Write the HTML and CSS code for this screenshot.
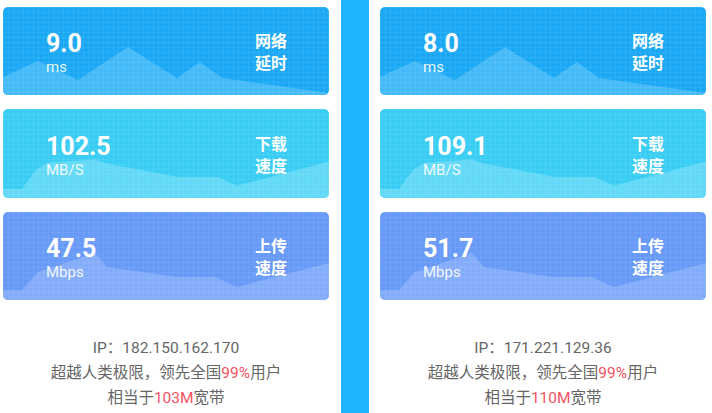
FILE: index.html
```html
<!DOCTYPE html>
<html lang="zh">
<head>
<meta charset="utf-8">
<link rel="stylesheet" href="styles.css">
</head>
<body>
<div class="page">
  <section class="panel panel-left">
    <div class="card card-ping">
      <svg class="wave" viewBox="0 0 326 88" preserveAspectRatio="none"><polygon points="0,70 35,54 75,73 125,40 174,71 197,55 219,71 326,86 326,88 0,88"/></svg>
      <div class="value"><div class="num">9.0</div><div class="unit">ms</div></div>
      <div class="label">网络<br>延时</div>
    </div>
    <div class="card card-down">
      <svg class="wave" viewBox="0 0 326 88" preserveAspectRatio="none"><polygon points="0,79 19,79 33,60 45,53 92,50 104,54 174,67 214,67 234,76 326,52 326,88 0,88"/></svg>
      <div class="value"><div class="num">102.5</div><div class="unit">MB/S</div></div>
      <div class="label">下载<br>速度</div>
    </div>
    <div class="card card-up">
      <svg class="wave" viewBox="0 0 326 88" preserveAspectRatio="none"><polygon points="0,78 19,78 35,60 92,41 104,55 174,65 212,65 234,75 326,51 326,88 0,88"/></svg>
      <div class="value"><div class="num">47.5</div><div class="unit">Mbps</div></div>
      <div class="label">上传<br>速度</div>
    </div>
    <div class="info">
      <p>IP：182.150.162.170</p>
      <p>超越人类极限，领先全国<span class="hl">99%</span>用户</p>
      <p>相当于<span class="hl">103M</span>宽带</p>
    </div>
  </section>
  <div class="divider"></div>
  <section class="panel panel-right">
    <div class="card card-ping">
      <svg class="wave" viewBox="0 0 326 88" preserveAspectRatio="none"><polygon points="0,70 35,54 75,73 125,40 174,71 197,55 219,71 326,86 326,88 0,88"/></svg>
      <div class="value"><div class="num">8.0</div><div class="unit">ms</div></div>
      <div class="label">网络<br>延时</div>
    </div>
    <div class="card card-down">
      <svg class="wave" viewBox="0 0 326 88" preserveAspectRatio="none"><polygon points="0,79 19,79 33,60 45,53 92,50 104,54 174,67 214,67 234,76 326,52 326,88 0,88"/></svg>
      <div class="value"><div class="num">109.1</div><div class="unit">MB/S</div></div>
      <div class="label">下载<br>速度</div>
    </div>
    <div class="card card-up">
      <svg class="wave" viewBox="0 0 326 88" preserveAspectRatio="none"><polygon points="0,78 19,78 35,60 92,41 104,55 174,65 212,65 234,75 326,51 326,88 0,88"/></svg>
      <div class="value"><div class="num">51.7</div><div class="unit">Mbps</div></div>
      <div class="label">上传<br>速度</div>
    </div>
    <div class="info">
      <p>IP：171.221.129.36</p>
      <p>超越人类极限，领先全国<span class="hl">99%</span>用户</p>
      <p>相当于<span class="hl">110M</span>宽带</p>
    </div>
  </section>
</div>
</body>
</html>
```
FILE: styles.css
```css
* { box-sizing: border-box; }
html, body { margin: 0; padding: 0; background: #fff; }
body {
  width: 712px;
  height: 413px;
  overflow: hidden;
  font-family: Roboto, "Noto Sans CJK SC", sans-serif;
}
.page {
  display: flex;
  height: 413px;
}
.panel {
  display: flex;
  flex-direction: column;
  padding-top: 7px;
}
.panel-left {
  width: 341px;
  padding-left: 3px;
  padding-right: 12px;
}
.divider {
  width: 28px;
  background: #1fb3fe;
}
.panel-right {
  width: 343px;
  padding-left: 11px;
  padding-right: 6px;
}
.card {
  position: relative;
  width: 326px;
  height: 88px;
  border-radius: 5px;
  overflow: hidden;
  display: flex;
  justify-content: space-between;
  align-items: center;
  padding: 0 42px 0 43px;
  color: #fff;
  margin-bottom: 14px;
}
.card-down { height: 89px; }
.card::after {
  content: "";
  position: absolute;
  inset: 0;
  background-image:
    repeating-linear-gradient(to right, rgba(255,255,255,0.07) 0 1px, transparent 1px 5px),
    repeating-linear-gradient(to bottom, rgba(255,255,255,0.07) 0 1px, transparent 1px 5px);
  pointer-events: none;
}
.wave {
  position: absolute;
  left: 0;
  top: 0;
  width: 100%;
  height: 100%;
}
.card-ping { background: #1aa8f5; }
.card-ping .wave polygon { fill: #45baf8; }
.card-down { background: #39cdf3; }
.card-down .wave polygon { fill: #62d9f6; }
.card-up { background: #6799f7; }
.card-up .wave polygon { fill: #83acfa; }
.value {
  position: relative;
  z-index: 1;
  margin-top: 4px;
}
.num {
  font-family: Roboto, sans-serif;
  font-weight: 700;
  font-size: 25px;
  line-height: 26px;
}
.unit {
  font-family: Roboto, sans-serif;
  font-size: 15px;
  line-height: 16px;
  margin-top: 2px;
  color: rgba(255,255,255,0.92);
}
.label {
  position: relative;
  z-index: 1;
  font-family: "Noto Sans CJK SC", sans-serif;
  font-weight: 700;
  font-size: 16px;
  line-height: 22px;
}
.info {
  margin-top: 22px;
  width: 326px;
  text-align: center;
  color: #666;
  font-family: Roboto, "Noto Sans CJK SC", sans-serif;
  font-size: 15.5px;
  line-height: 25px;
}
.info p { margin: 0; }
.hl { color: #f2525f; }
```
